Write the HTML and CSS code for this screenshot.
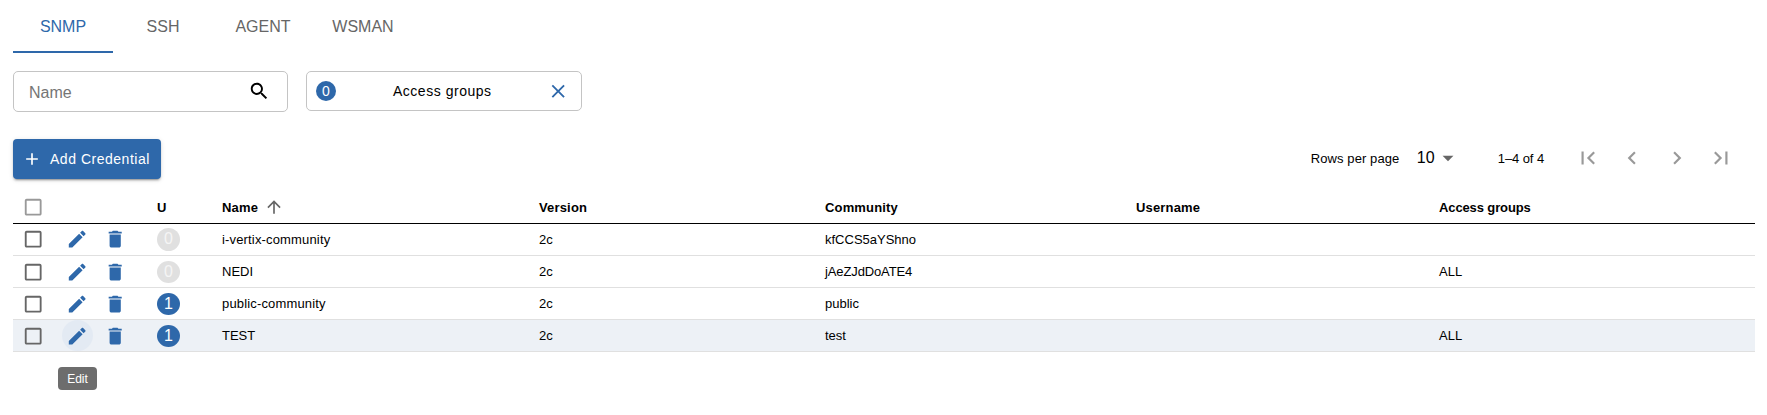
FILE: index.html
```html
<!DOCTYPE html>
<html lang="en">
<head>
<meta charset="utf-8">
<title>Credentials</title>
<link rel="stylesheet" href="styles.css">
</head>
<body>
<svg class="sprite" width="0" height="0">
  <symbol id="search" viewBox="0 0 24 24"><path d="M15.5 14h-.79l-.28-.27C15.41 12.59 16 11.11 16 9.5 16 5.91 13.09 3 9.5 3S3 5.91 3 9.5 5.91 16 9.5 16c1.61 0 3.09-.59 4.23-1.57l.27.28v.79l5 4.99L20.49 19l-4.99-5zm-6 0C7.01 14 5 11.99 5 9.5S7.01 5 9.5 5 14 7.01 14 9.5 11.99 14 9.5 14z"/></symbol>
  <symbol id="close" viewBox="0 0 24 24"><path d="M19 6.41L17.59 5 12 10.59 6.41 5 5 6.41 10.59 12 5 17.59 6.41 19 12 13.41 17.59 19 19 17.59 13.41 12z"/></symbol>
  <symbol id="add" viewBox="0 0 24 24"><path d="M19 13h-6v6h-2v-6H5v-2h6V5h2v6h6v2z"/></symbol>
  <symbol id="box" viewBox="0 0 24 24"><path d="M19 5v14H5V5h14m0-2H5c-1.1 0-2 .9-2 2v14c0 1.1.9 2 2 2h14c1.1 0 2-.9 2-2V5c0-1.1-.9-2-2-2z"/></symbol>
  <symbol id="edit" viewBox="0 0 24 24"><path d="M3 17.25V21h3.75L17.81 9.94l-3.75-3.75L3 17.25zM20.71 7.04c.39-.39.39-1.02 0-1.41l-2.34-2.34c-.39-.39-1.02-.39-1.41 0l-1.83 1.83 3.75 3.75 1.83-1.83z"/></symbol>
  <symbol id="trash" viewBox="0 0 24 24"><path d="M6 19c0 1.1.9 2 2 2h8c1.1 0 2-.9 2-2V7H6v12zM19 4h-3.5l-1-1h-5l-1 1H5v2h14V4z"/></symbol>
  <symbol id="up" viewBox="0 0 24 24"><path d="M4 12l1.41 1.41L11 7.83V20h2V7.83l5.58 5.59L20 12l-8-8-8 8z"/></symbol>
  <symbol id="drop" viewBox="0 0 24 24"><path d="M7 10l5 5 5-5z"/></symbol>
  <symbol id="first" viewBox="0 0 24 24"><path d="M18.41 16.59L13.82 12l4.59-4.59L17 6l-6 6 6 6zM6 6h2v12H6z"/></symbol>
  <symbol id="prev" viewBox="0 0 24 24"><path d="M15.41 16.59L10.83 12l4.58-4.59L14 6l-6 6 6 6z"/></symbol>
  <symbol id="next" viewBox="0 0 24 24"><path d="M8.59 16.59L13.17 12 8.59 7.41 10 6l6 6-6 6z"/></symbol>
  <symbol id="last" viewBox="0 0 24 24"><path d="M5.59 7.41L10.18 12l-4.59 4.59L7 18l6-6-6-6zM16 6h2v12h-2z"/></symbol>
</svg>
<nav class="tabs">
  <a class="tab active">SNMP</a><a class="tab">SSH</a><a class="tab">AGENT</a><a class="tab">WSMAN</a>
</nav>
<div class="filters">
  <div class="field"><span>Name</span><svg class="icon"><use href="#search"/></svg></div>
  <div class="groups"><span class="count">0</span><span class="label">Access groups</span><svg class="icon blue"><use href="#close"/></svg></div>
</div>
<div class="toolbar">
  <button class="add"><svg><use href="#add"/></svg><span>Add Credential</span></button>
  <div class="pager">
    <span class="small rows">Rows per page</span>
    <span class="size">10</span><svg class="arrow"><use href="#drop"/></svg>
    <span class="small range">1–4 of 4</span>
    <svg class="nav"><use href="#first"/></svg><svg class="nav"><use href="#prev"/></svg><svg class="nav"><use href="#next"/></svg><svg class="nav"><use href="#last"/></svg>
  </div>
</div>
<div class="table">
  <div class="row head">
    <div class="mid"><svg class="icon light"><use href="#box"/></svg></div><div></div><div></div><div class="used">U</div>
    <div class="name">Name<svg class="sort"><use href="#up"/></svg></div><div class="name">Version</div><div class="name">Community</div><div class="name">Username</div><div class="tight">Access groups</div>
  </div>
  <div class="row first">
    <div class="mid"><svg class="icon grey"><use href="#box"/></svg></div><div class="mid"><svg class="icon blue"><use href="#edit"/></svg></div><div class="mid"><svg class="icon blue"><use href="#trash"/></svg></div>
    <div class="used"><span class="badge off">0</span></div><div class="name">i-vertix-community</div><div>2c</div><div>kfCCS5aYShno</div><div></div><div></div>
  </div>
  <div class="row">
    <div class="mid"><svg class="icon grey"><use href="#box"/></svg></div><div class="mid"><svg class="icon blue"><use href="#edit"/></svg></div><div class="mid"><svg class="icon blue"><use href="#trash"/></svg></div>
    <div class="used"><span class="badge off">0</span></div><div>NEDI</div><div>2c</div><div class="tight">jAeZJdDoATE4</div><div></div><div>ALL</div>
  </div>
  <div class="row">
    <div class="mid"><svg class="icon grey"><use href="#box"/></svg></div><div class="mid"><svg class="icon blue"><use href="#edit"/></svg></div><div class="mid"><svg class="icon blue"><use href="#trash"/></svg></div>
    <div class="used"><span class="badge">1</span></div><div class="name">public-community</div><div>2c</div><div>public</div><div></div><div></div>
  </div>
  <div class="row hover">
    <div class="mid"><svg class="icon grey"><use href="#box"/></svg></div><div class="edit"><span class="halo"><svg class="icon blue"><use href="#edit"/></svg></span><span class="tooltip">Edit</span></div><div class="mid"><svg class="icon blue"><use href="#trash"/></svg></div>
    <div class="used"><span class="badge">1</span></div><div>TEST</div><div>2c</div><div>test</div><div></div><div>ALL</div>
  </div>
</div>
</body>
</html>
```
FILE: styles.css
```css
* { box-sizing: border-box; }
body {
  margin: 0;
  min-height: 415px;
  padding: 0 12px 0 13px;
  background: #fff;
  color: #000;
  font-family: "Liberation Sans", Arial, sans-serif;
}
svg { display: block; fill: currentColor; flex: none; }
.sprite { position: absolute; }
.icon { width: 22.4px; height: 22.4px; }
.blue { color: #2e68aa; }
.grey { color: #666; }
.light { color: #999; }

.tabs { display: flex; height: 53px; }
.tab {
  width: 100px;
  height: 53px;
  padding-top: 1px;
  border-bottom: 2px solid transparent;
  color: #666;
  font-size: 16px;
  line-height: 52px;
  text-align: center;
}
.active { color: #2e68aa; border-color: #2e68aa; }

.filters { display: flex; align-items: flex-start; gap: 18px; margin-top: 18px; }
.field, .groups {
  display: flex;
  align-items: center;
  justify-content: space-between;
  border: 1px solid #c4c4c4;
  border-radius: 5px;
}
.field { width: 275px; height: 41px; padding: 0 17px 0 15px; font-size: 16px; color: #757575; }
.field span { padding-top: 2px; }
.field .icon { color: #000; margin-bottom: 1px; }
.groups { width: 276px; height: 40px; padding: 0 12px 0 9px; font-size: 14px; letter-spacing: .53px; }
.label { padding-left: 2px; }
.count {
  width: 20px;
  height: 20px;
  border-radius: 50%;
  background: #2e68aa;
  color: #fff;
  line-height: 20px;
  text-align: center;
  letter-spacing: 0;
}

.toolbar { display: flex; align-items: flex-start; justify-content: space-between; height: 40px; margin-top: 27px; }
.add {
  display: flex;
  align-items: center;
  gap: 8px;
  width: 148px;
  height: 40px;
  padding: 0 0 0 9px;
  border: 0;
  border-radius: 4px;
  background: #2e68aa;
  box-shadow: 0 3px 1px -2px rgba(0,0,0,.2), 0 2px 2px rgba(0,0,0,.14), 0 1px 5px rgba(0,0,0,.12);
  color: #fff;
  font: 14px "Liberation Sans", Arial, sans-serif;
  letter-spacing: .52px;
  white-space: nowrap;
}
.add svg { width: 20px; height: 20px; }
.pager { display: flex; align-items: center; height: 38px; padding-right: 21px; }
.small { font-size: 13px; }
.rows { width: 106px; letter-spacing: .08px; }
.size { width: 18px; font-size: 16px; }
.arrow { width: 26px; height: 26px; color: #666; }
.range { width: 77px; margin-left: 37px; letter-spacing: -.1px; }
.nav { width: 26px; height: 26px; margin-right: 18.4px; color: #999; }
.nav:last-child { margin-right: 0; }

.table { margin-top: 12px; }
.row {
  display: grid;
  grid-template-columns: 41px 46px 30px 92px 317px 286px 311px 303px 1fr;
  height: 32px;
  border-bottom: 1px solid #e0e0e0;
  font-size: 13px;
}
.row > div { display: flex; align-items: center; }
.row > .mid { justify-content: center; padding-top: 1px; }
.row > .used { padding: 1px 0 0 27px; }
.row.head > div, .row.first > div { padding-top: 0; }
.row > .name { letter-spacing: .16px; }
.row > .tight { letter-spacing: -.12px; }
.head { height: 33px; border-color: #000; font-weight: bold; }
.sort { width: 20px; height: 20px; margin-left: 6px; color: #666; }
.badge {
  width: 23px;
  height: 22px;
  border-radius: 50%;
  background: #2e68aa;
  color: #fff;
  font-size: 16px;
  line-height: 21px;
  text-align: center;
}
.first .badge { height: 23px; }
.off { background: #e0e0e0; color: #f5f5f5; }
.hover { background: #edf1f6; }
.row > .edit { position: relative; justify-content: center; }
.halo {
  display: flex;
  align-items: center;
  justify-content: center;
  width: 31px;
  height: 31px;
  padding-top: 1px;
  border-radius: 50%;
  background: #e3eaf3;
}
.tooltip {
  position: absolute;
  top: 47px;
  left: 4px;
  z-index: 1;
  width: 39px;
  height: 23px;
  border-radius: 4px;
  background: #6d6d6d;
  color: #fff;
  font-size: 12px;
  line-height: 25px;
  text-align: center;
}
```
